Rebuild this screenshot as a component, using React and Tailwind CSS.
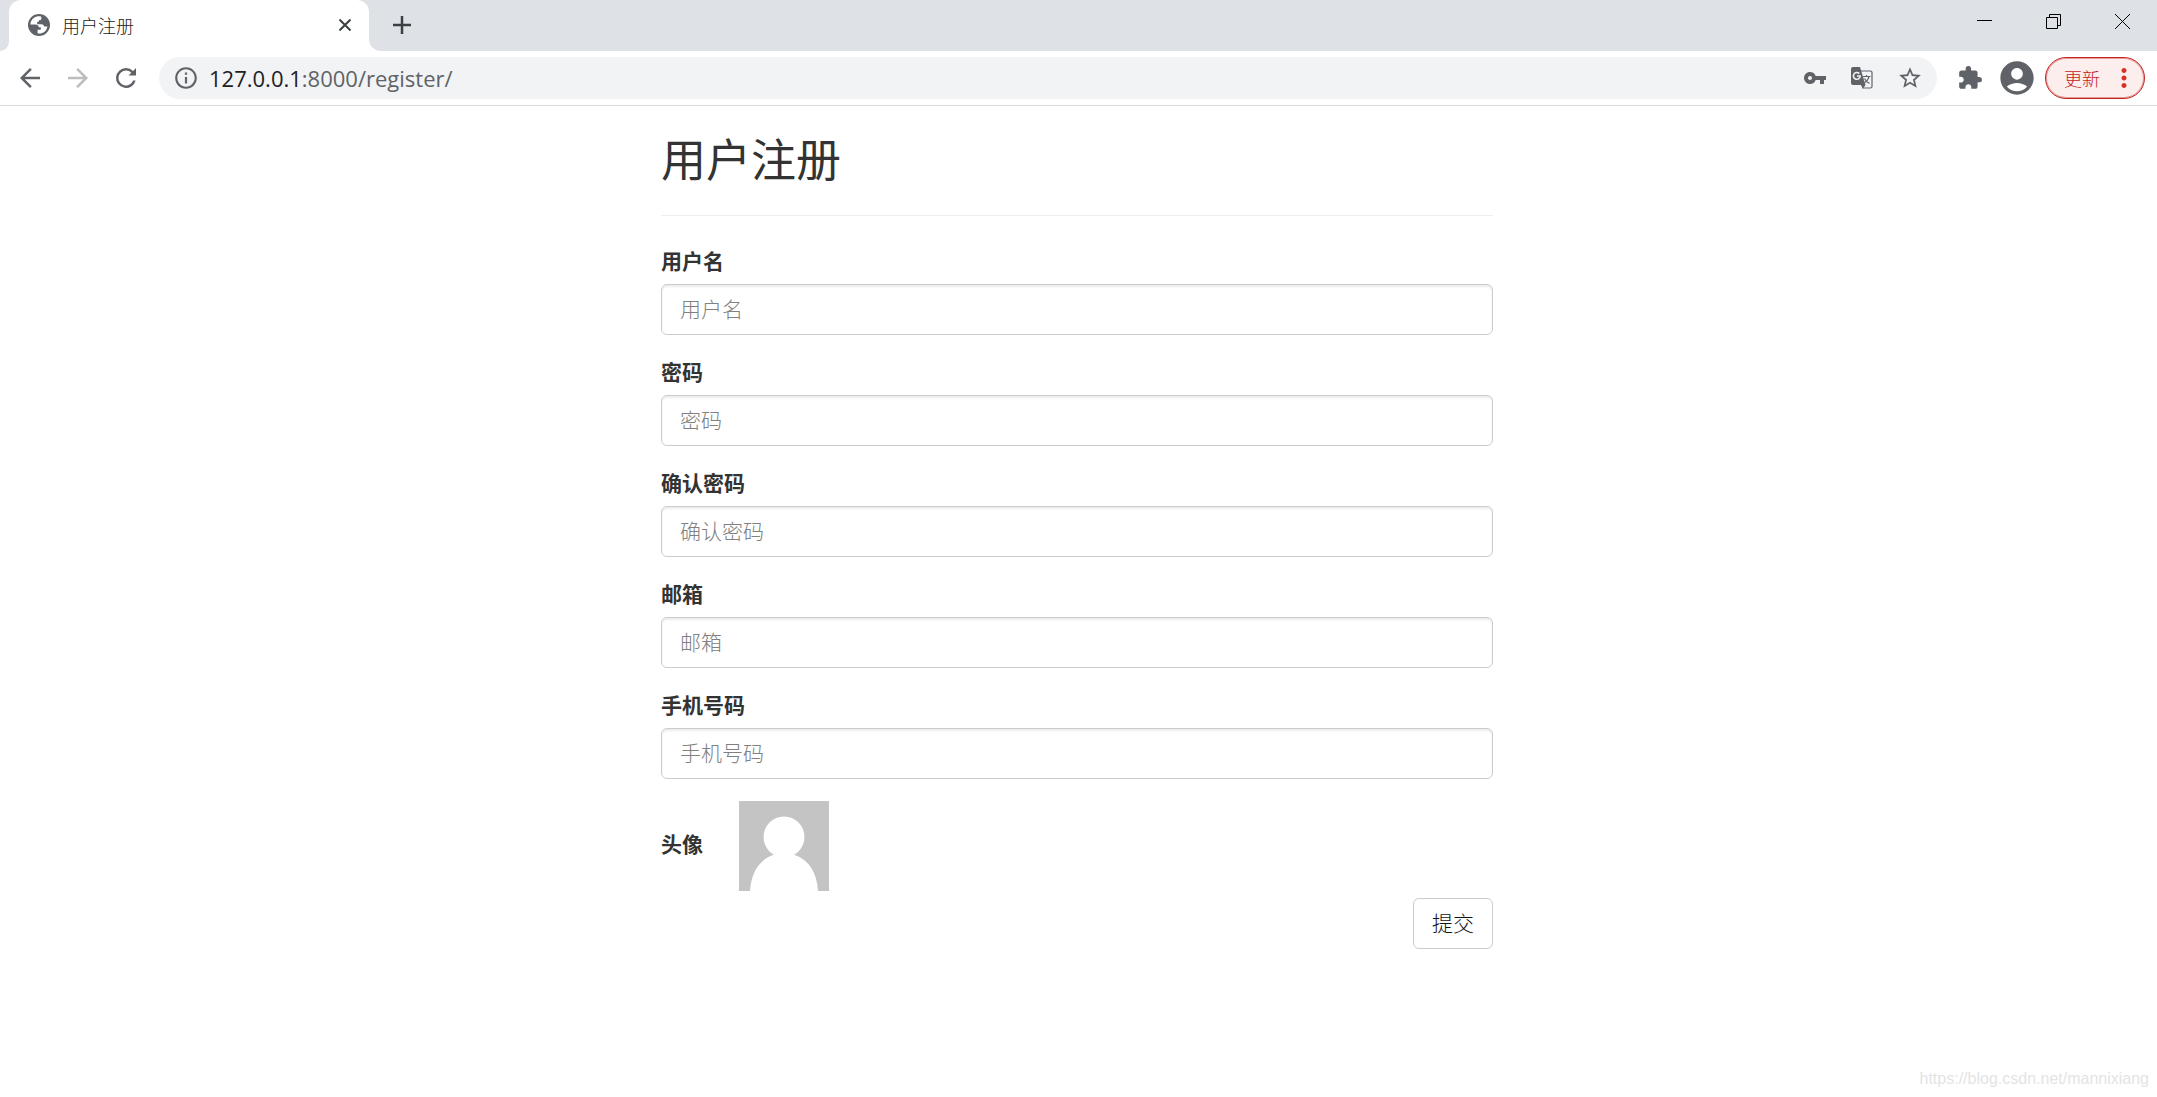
import { useState } from 'react';
import {
  MdAccountCircle,
  MdArrowBack,
  MdArrowForward,
  MdExtension,
  MdInfoOutline,
  MdMoreVert,
  MdStarBorder,
  MdVpnKey,
} from 'react-icons/md';

const fields = [
  { id: 'username', label: '用户名', type: 'text' },
  { id: 'password', label: '密码', type: 'password' },
  { id: 're_password', label: '确认密码', type: 'password' },
  { id: 'email', label: '邮箱', type: 'email' },
  { id: 'phone', label: '手机号码', type: 'text' },
];

function GlobeIcon() {
  return (
    <svg viewBox="0 0 22 22" className="size-[22px] shrink-0" aria-hidden="true">
      <circle cx="11" cy="11" r="11" fill="#5f6368" />
      <path
        d="M13 2.600C8.500 1.500 4 4 2.600 8.600l-.2 2h5c2 0 3.300 1 3.400 2.600h2v2.600H9.600v3.600c4.800.8 9-2.200 9.800-7h-3.200c-.6-1.500-1.300-2.200-2.800-2.200H9.200V7.800c1.400 0 2-.5 2-1.800h1.600c.8-1 .9-2.200.2-3.400z"
        fill="#fff"
      />
    </svg>
  );
}

function ReloadIcon() {
  return (
    <svg viewBox="0 0 24 24" className="size-[30px]" fill="#5f6368" aria-hidden="true">
      <path d="M17.650 6.350A7.960 7.960 0 0 0 12 4a8 8 0 1 0 7.730 10h-2.080A6 6 0 1 1 12 6c1.660 0 3.140.69 4.220 1.780L14 10h6V4l-2.350 2.350z" />
    </svg>
  );
}

function TranslateIcon() {
  return (
    <svg viewBox="0 0 22 22" className="size-[22px]" aria-hidden="true">
      <path d="M9 4h10.500a1.500 1.500 0 0 1 1.500 1.500v14a1.500 1.500 0 0 1-1.500 1.500H12z" fill="none" stroke="#5f6368" strokeWidth="1.200" />
      <path d="M2 0h7l5.500 18H2a2 2 0 0 1-2-2V2a2 2 0 0 1 2-2z" fill="#5f6368" />
      <path d="M9.800 18h4.700L12 21.500z" fill="#5f6368" />
      <path d="M8.300 6.600A3.400 3.400 0 1 0 9.200 9H6" fill="none" stroke="#f1f3f4" strokeWidth="1.600" />
      <path d="M12 9.500h7.500M15.500 8v1.500M18 9.500c-.6 3-2.500 5-4.500 6.300M13.500 11.500c1 2 3 4 5 5" fill="none" stroke="#5f6368" strokeWidth="1.200" />
    </svg>
  );
}

function BrowserBar() {
  return (
    <header className="border-b border-[#d9dadc] text-[#5f6368]">
      <div className="flex h-[51px] items-stretch bg-[#dee1e6]">
        <div className="w-[9px] bg-white">
          <div className="h-full rounded-br-xl bg-[#dee1e6]" />
        </div>
        <div className="flex w-[360px] items-center gap-3 rounded-t-xl bg-white pr-[14px] pb-0.5 pl-[19px]">
          <GlobeIcon />
          <span className="flex-1 text-lg font-light text-[#202124]">用户注册</span>
          <button aria-label="关闭标签页" className="flex size-5 items-center justify-center">
            <svg viewBox="0 0 12 12" className="size-3" stroke="#3c4043" strokeWidth="2" aria-hidden="true">
              <path d="M.5.5l11 11M11.500.5l-11 11" />
            </svg>
          </button>
        </div>
        <div className="w-3 bg-white">
          <div className="h-full rounded-bl-xl bg-[#dee1e6]" />
        </div>
        <button aria-label="新标签页" className="flex w-[42px] items-center justify-center pb-0.5">
          <svg viewBox="0 0 18 18" className="size-[18px]" stroke="#3c4043" strokeWidth="2.500" aria-hidden="true">
            <path d="M9 0v18M0 9h18" />
          </svg>
        </button>
        <div className="ml-auto flex h-[42px] text-black">
          <button aria-label="最小化" className="flex w-[69px] items-center justify-center">
            <svg viewBox="0 0 15 15" className="size-[15px]" fill="none" stroke="currentColor" aria-hidden="true">
              <path d="M0 6.500h15" />
            </svg>
          </button>
          <button aria-label="还原" className="flex w-[69px] items-center justify-center">
            <svg viewBox="0 0 15 15" className="size-[15px]" fill="none" stroke="currentColor" aria-hidden="true">
              <path d="M.5 3.500h11v11H.5zM3.500 3V.5h11v11H12" />
            </svg>
          </button>
          <button aria-label="关闭" className="flex w-[69px] items-center justify-center">
            <svg viewBox="0 0 15 15" className="size-[15px]" fill="none" stroke="currentColor" aria-hidden="true">
              <path d="M0 0l15 15M15 0L0 15" />
            </svg>
          </button>
        </div>
      </div>

      <div className="flex h-[54px] items-center pr-3 pl-[15px]">
        <div className="flex gap-[18px]">
          <button aria-label="后退"><MdArrowBack className="size-[30px]" /></button>
          <button aria-label="前进" className="text-[#babcbe]"><MdArrowForward className="size-[30px]" /></button>
          <button aria-label="重新加载"><ReloadIcon /></button>
        </div>
        <div className="ml-[18px] flex h-[42px] flex-1 items-center rounded-full bg-[#f1f3f4] pr-[14px] pl-[14px]">
          <MdInfoOutline className="size-[26px]" />
          <a href="#register" className="ml-2.5 flex-1 font-['Open_Sans','Noto_Sans_CJK_SC',sans-serif] text-[22px]">
            <span className="text-[#202124]">127.0.0.1</span>:8000/register/
          </a>
          <div className="flex items-center gap-6">
            <button aria-label="管理密码"><MdVpnKey className="size-6" /></button>
            <button aria-label="翻译此页"><TranslateIcon /></button>
            <button aria-label="收藏"><MdStarBorder className="size-[26px]" /></button>
          </div>
        </div>
        <button aria-label="扩展程序" className="ml-5"><MdExtension className="size-[26px]" /></button>
        <button aria-label="用户" className="ml-[14px]"><MdAccountCircle className="size-10" /></button>
        <button className="ml-2 flex h-[42px] w-[100px] items-center justify-between rounded-full border border-[#c5221f] bg-[#fceeed] pr-[5px] pl-[18px] text-lg font-light text-[#c5221f] ring-1 ring-[#c5221f]/40 ring-inset">
          更新
          <MdMoreVert className="size-[30px] text-[#d93025]" />
        </button>
      </div>
    </header>
  );
}

function RegisterForm() {
  const [values, setValues] = useState({});

  const handleChange = (id, value) => {
    setValues(prev => ({ ...prev, [id]: value }));
  };

  return (
    <form className="text-[21px] leading-[28px]" onSubmit={(e) => e.preventDefault()}>
      {fields.map(({ id, label, type }) => (
        <div key={id} className="mb-[22px]">
          <label htmlFor={id} className="mb-2.5 block font-bold">{label}</label>
          <input
            type={type}
            id={id}
            placeholder={label}
            value={values[id] ?? ''}
            onChange={(e) => handleChange(id, e.target.value)}
            className="block h-[51px] w-full rounded-md border border-[#ccc] px-[18px] pb-[3px] font-light text-[#555] shadow-[inset_0_2px_2px_rgba(0,0,0,0.075)] placeholder:text-[#808080]"
          />
        </div>
      ))}

      <label htmlFor="avatar" className="flex items-center gap-9 font-bold">
        <span className="pb-1.5">头像</span>
        <svg viewBox="0 0 90 90" className="size-[90px]" aria-hidden="true">
          <path d="M0 0h90v90H0z" fill="#c4c4c4" />
          <circle cx="45" cy="36" r="20.500" fill="#fff" />
          <path d="M11 90c1-18 9-31 23-36h22c14 5 22 18 23 36z" fill="#fff" />
        </svg>
      </label>
      <input type="file" id="avatar" className="hidden" />

      <div className="mt-[7px] flex justify-end">
        <button type="submit" className="h-[51px] rounded-md border border-[#ccc] px-[18px] pb-[3px] font-light text-[#111]">提交</button>
      </div>
    </form>
  );
}

export default function App() {
  return (
    <div className="relative min-h-screen bg-white font-['Noto_Sans_CJK_SC',sans-serif] text-[#333]">
      <BrowserBar />
      <main className="pt-[29px] pr-[3px]">
        <div className="mx-auto max-w-[832px]">
          <h1 className="border-b border-[#eee] pb-[34px] text-[45px] leading-[46px]">用户注册</h1>
          <div className="pt-[30px]">
            <RegisterForm />
          </div>
        </div>
      </main>
      <p className="absolute right-2 bottom-1.5 font-['Liberation_Sans',sans-serif] text-base text-[#e4e4e4]">
        https://blog.csdn.net/mannixiang
      </p>
    </div>
  );
}
